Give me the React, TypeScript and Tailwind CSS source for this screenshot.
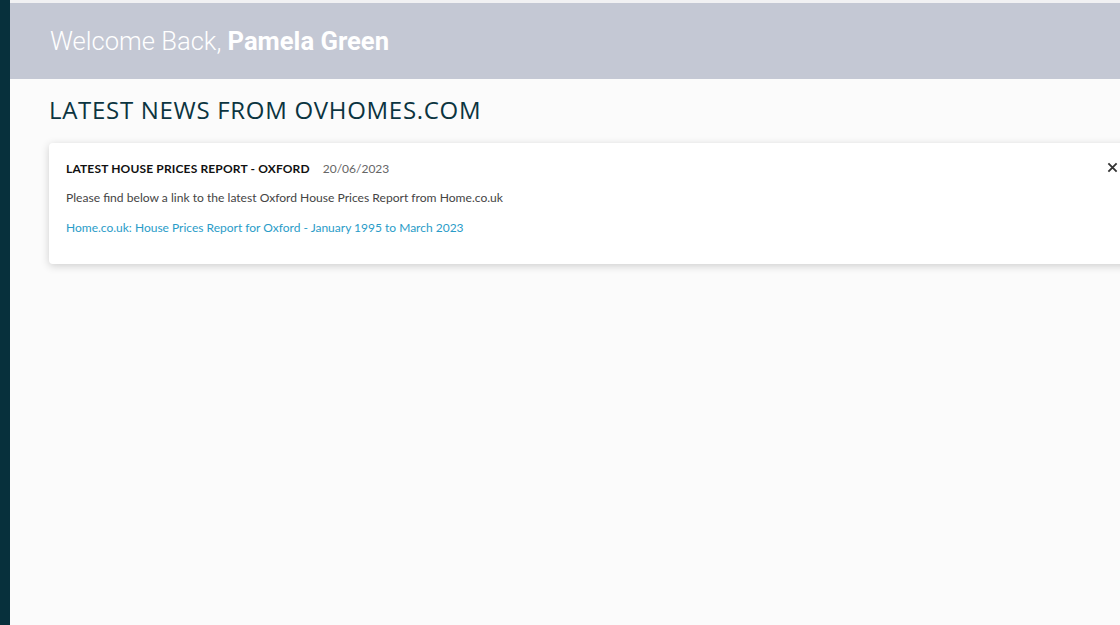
export default function App() {
  return (
    <div className="flex h-[625px] w-[1120px] overflow-hidden bg-[#fbfbfb]">
      <aside className="w-[10px] shrink-0 bg-[#07303c]" />
      <main className="flex min-w-0 flex-1 flex-col">
        <div className="h-[3px] bg-[#f1f1f3]" />
        <header className="flex h-[76px] shrink-0 items-center bg-[#c4c8d4] pl-[40px] font-['Roboto',sans-serif] text-[25.6px] font-light text-white">
          Welcome Back,&nbsp;<span className="font-bold">Pamela Green</span>
        </header>
        <section className="pl-[39px] pt-[16px]">
          <h1 className="font-['Open_Sans',sans-serif] text-[24px] leading-[30px] tracking-[0.7px] text-[#0b3440]">
            LATEST NEWS FROM OVHOMES.COM
          </h1>
          <div className="relative mt-[18px] w-[1090px] rounded-[4px] bg-white px-[17px] pb-[27px] pt-[17px] font-['Lato',sans-serif] shadow-[0_2px_8px_rgba(0,0,0,0.18)]">
            <div className="flex items-baseline gap-[13px]">
              <span className="text-[12px] font-bold tracking-[0.15px] text-[#111]">
                LATEST HOUSE PRICES REPORT - OXFORD
              </span>
              <span className="text-[12px] text-[#666]">20/06/2023</span>
            </div>
            <p className="mt-[11px] text-[12.1px] text-[#444]">
              Please find below a link to the latest Oxford House Prices Report from Home.co.uk
            </p>
            <a className="mt-[12px] block text-[12px] text-[#2a9cc8]" href="#">
              Home.co.uk: House Prices Report for Oxford - January 1995 to March 2023
            </a>
            <button className="absolute left-[1058px] top-[19px] text-[#333]">
              <svg width="11" height="11" viewBox="0 0 12 12" stroke="currentColor" strokeWidth="2">
                <path d="M1.5 1.5l9 9M10.5 1.5l-9 9" />
              </svg>
            </button>
          </div>
        </section>
      </main>
    </div>
  );
}
